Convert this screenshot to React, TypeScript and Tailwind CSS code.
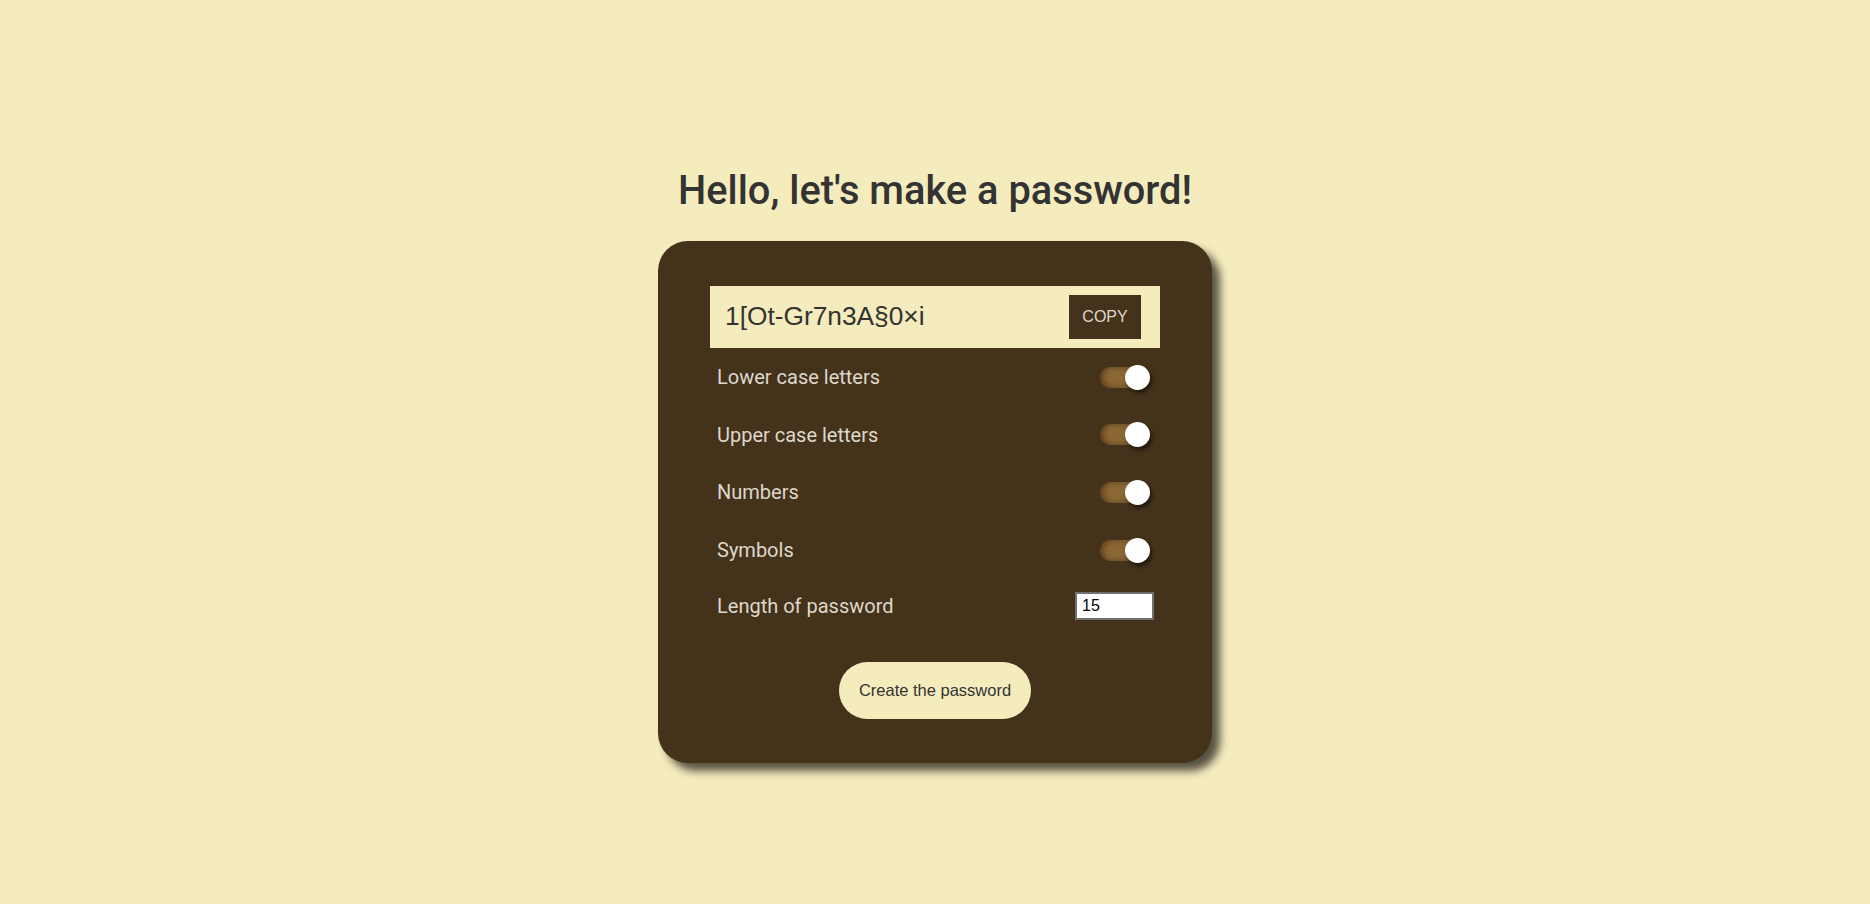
import React from "react";

function Toggle() {
  return (
    <div className="relative w-[50px] h-[25px]">
      <div className="absolute left-0 top-[2px] w-[48px] h-[21px] rounded-full bg-[#8a6733] shadow-[inset_3px_0_5px_rgba(60,40,15,0.6)]" />
      <div className="absolute right-0 top-0 w-[25px] h-[25px] rounded-full bg-white shadow-[2px_3px_4px_rgba(0,0,0,0.55)]" />
    </div>
  );
}

function Row({ label, children, pr, h }: { label: string; children: React.ReactNode; pr: string; h: string }) {
  return (
    <div className={`flex items-center justify-between ${h} pl-[7px] ${pr}`}>
      <span className="text-[20px] text-[#ddd8ca] font-['Roboto',sans-serif]">{label}</span>
      {children}
    </div>
  );
}

export default function App() {
  return (
    <div className="min-h-screen w-full bg-[#f5ecbd] flex flex-col items-center pt-[167px] font-['Roboto',sans-serif]">
      <h1 className="text-[39.8px] leading-[47px] font-medium text-[#333333] mb-[27px]">
        Hello, let's make a password!
      </h1>
      <div className="w-[554px] bg-[#45321b] rounded-[30px] px-[52px] pt-[45px] pb-[44px] shadow-[8px_8px_9px_rgba(0,0,0,0.65)]">
        <div className="h-[62px] bg-[#f5ecbd] flex items-center justify-between pl-[15px] pr-[19px]">
          <span className="text-[26.3px] text-[#333333] font-['Liberation_Sans',Arial,sans-serif]">1[Ot-Gr7n3A§0×i</span>
          <button className="w-[72px] h-[44px] bg-[#45321b] text-[#ddd8ca] text-[16px] font-['Liberation_Sans',Arial,sans-serif]">
            COPY
          </button>
        </div>
        <Row label="Lower case letters" pr="pr-[10px]" h="h-[58px]"><Toggle /></Row>
        <Row label="Upper case letters" pr="pr-[10px]" h="h-[57px]"><Toggle /></Row>
        <Row label="Numbers" pr="pr-[10px]" h="h-[58px]"><Toggle /></Row>
        <Row label="Symbols" pr="pr-[10px]" h="h-[58px]"><Toggle /></Row>
        <Row label="Length of password" pr="pr-[6px]" h="h-[54px]">
          <input
            type="number"
            defaultValue={15}
            className="w-[79px] h-[28px] bg-white border-2 border-[#707070] px-[5px] text-[16px] text-black font-['Liberation_Sans',Arial,sans-serif] outline-none"
          />
        </Row>
        <div className="flex justify-center mt-[29px]">
          <button className="h-[57px] px-[20px] rounded-full bg-[#f5ecbd] text-[#333333] text-[16.5px] font-['Liberation_Sans',Arial,sans-serif]">
            Create the password
          </button>
        </div>
      </div>
    </div>
  );
}
